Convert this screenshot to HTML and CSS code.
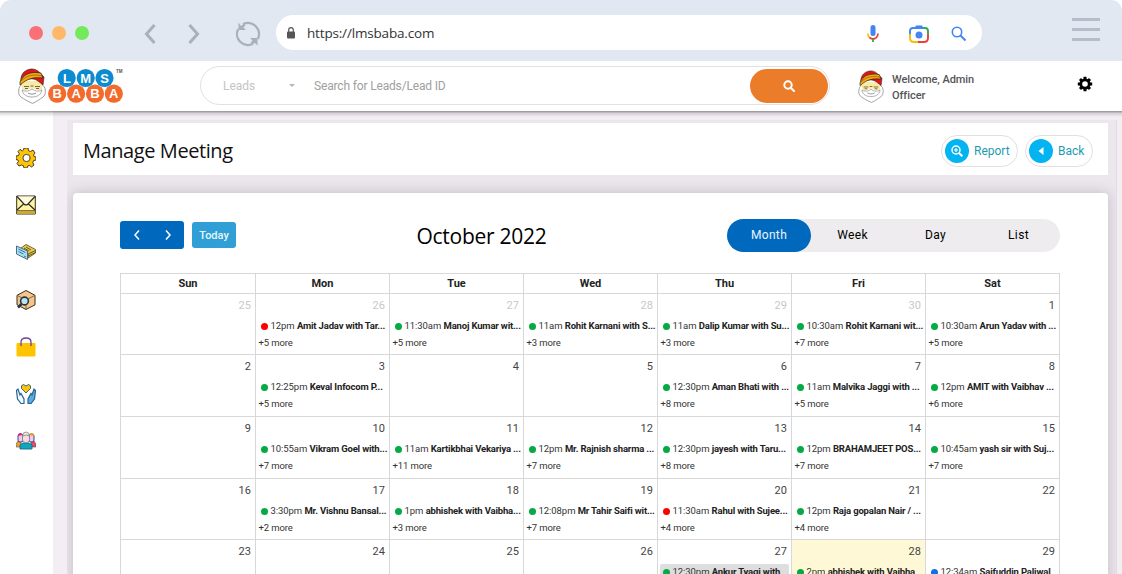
FILE: index.html
```html
<!DOCTYPE html>
<html lang="en">
<head>
<meta charset="utf-8">
<title>LMS Baba - Manage Meeting</title>
<link rel="stylesheet" href="styles.css">
</head>
<body>
<svg class="defs" aria-hidden="true">
  <symbol id="santa" viewBox="0 0 28 36">
    <path d="M1.500 19C0 23 .4 27 3 29c3 2 6 4 11.500 6.400C19 33.500 22 31 25 29c2.500-2 3-6 1.500-10l-3-3H4z" fill="#fff" stroke="#777" stroke-width=".7"/>
    <path d="M4 13h20v8c-1 2-4 1-5 1-3-2-7-2-10 0-2 1-5 0-5-2z" fill="#fbe9a6"/>
    <path d="M3 15C2 8 5 2 13 1c6-.5 9 4 13 8l-1 8-5-4C14 9 8 11 3 15z" fill="#e2131b" stroke="#222" stroke-width=".6"/>
    <path d="M2 14C5 7 11 3 23 5l2 5c-9-1-15 0-23 7z" fill="#f7a80d" stroke="#222" stroke-width=".7"/>
    <path d="M3 13C9 7 16 6 24 8" fill="none" stroke="#7b4b08" stroke-width=".6"/>
    <path d="M6 18.500h5m6 0h5M7 20.500h3m8 0h3M12.500 18h3" fill="none" stroke="#444" stroke-width=".8"/>
    <path d="M4 22c4 2 7 1 10-1 3 2 6 3 10 1-1 5-5 7-10 7s-9-2-10-7z" fill="#fff" stroke="#888" stroke-width=".7"/>
    <path d="M10 25c3 1.500 5 1.500 8 0" fill="none" stroke="#666" stroke-width=".7"/>
  </symbol>
</svg>

<header class="browser">
  <div class="lights"><i class="red"></i><i class="amber"></i><i class="green"></i></div>
  <svg class="nav-arrow" viewBox="0 0 12 20"><path d="M10.500 1 2.500 10l8 9" fill="none" stroke="#a9b0bc" stroke-width="3"/></svg>
  <svg class="nav-arrow next" viewBox="0 0 12 20"><path d="m1.500 1 8 9-8 9" fill="none" stroke="#a9b0bc" stroke-width="3"/></svg>
  <svg class="reload" viewBox="0 0 26 26"><g fill="none" stroke="#a9b0bc" stroke-width="2.300"><path d="M8 3.200A11 11 0 0 1 22.800 18"/><path d="M18 22.800A11 11 0 0 1 3.200 8"/></g><path d="M3.500 1.500V9H11L8.500 6.500l2-2.500-2-1-2.500 2zM22.500 24.500V17H15l2.500 2.500-2 2.500 2 1 2.500-1z" fill="#a9b0bc"/></svg>
  <div class="url">
    <svg class="lock" viewBox="0 0 8 12"><path d="M1.700 5V3a2.300 2.300 0 0 1 4.600 0v2" fill="none" stroke="#54565a" stroke-width="1.200"/><rect y="4.500" width="8" height="7" rx="1" fill="#54565a"/></svg>
    <span>https://lmsbaba.com</span>
    <svg class="mic" viewBox="0 0 12 18"><rect x="3.500" y="0" width="5" height="11" rx="2.500" fill="#4285f4"/><path d="M1 8.500A5 5 0 0 0 3 13" fill="none" stroke="#fbbc04" stroke-width="1.700"/><path d="M2.600 12.500Q6 15.500 9.500 12.300 11 10.500 11 8.500" fill="none" stroke="#ea4335" stroke-width="1.700"/><path d="M6 14v3" stroke="#34a853" stroke-width="1.800"/></svg>
    <svg class="camera" viewBox="0 0 20 18"><g fill="none" stroke-width="1.900"><path d="M1 10V6q0-3 3-3h2" stroke="#4285f4"/><path d="M14 3h2q3 0 3 3v3" stroke="#34a853"/><path d="M19 9v4q0 4-4 4H8" stroke="#ea4335"/><path d="M1 9v4q0 4 4 4h4" stroke="#fbbc04"/></g><path d="M5 4 7 .500h6L15 4z" fill="#4285f4"/><circle cx="10" cy="10" r="3.500" fill="#4285f4"/></svg>
    <svg class="find" viewBox="0 0 16 16"><circle cx="6" cy="6" r="4.700" fill="none" stroke="#4285f4" stroke-width="1.600"/><path d="m9.500 9.500 5 5" stroke="#4285f4" stroke-width="2"/></svg>
  </div>
  <div class="burger"><i></i><i></i><i></i></div>
</header>

<div class="appbar">
  <svg class="santa-logo"><use href="#santa"/></svg>
  <svg class="brand" viewBox="48 68 76 36">
    <g fill="#0c8bd0"><circle cx="66.700" cy="78" r="9.100"/><circle cx="85.700" cy="78" r="9.100"/><circle cx="104.500" cy="78" r="9.100"/></g>
    <g fill="#f26a2c"><circle cx="57.200" cy="93.700" r="9.100"/><circle cx="76.100" cy="93.700" r="9.100"/><circle cx="95" cy="93.700" r="9.100"/><circle cx="113.800" cy="93.700" r="9.100"/></g>
    <g class="brand-text"><text x="67" y="82.500">L</text><text x="85.700" y="82.500">M</text><text x="104.500" y="82.500">S</text><text x="57.200" y="98.300">B</text><text x="76.100" y="98.300">A</text><text x="95" y="98.300">B</text><text x="113.800" y="98.300">A</text></g>
    <text class="tm" x="116" y="73">TM</text>
  </svg>
  <div class="search">
    <span class="scope">Leads</span><i class="caret"></i>
    <span class="hint">Search for Leads/Lead ID</span>
    <div class="go"><svg viewBox="0 0 12 12"><circle cx="5" cy="5" r="3.700" fill="none" stroke="#fff" stroke-width="2"/><path d="m8 8 3 3" stroke="#fff" stroke-width="2.200" stroke-linecap="round"/></svg></div>
  </div>
  <svg class="avatar"><use href="#santa"/></svg>
  <div class="welcome">Welcome, Admin<br>Officer</div>
  <svg class="settings" viewBox="-8 -8 16 16"><circle r="4.200" fill="none" stroke="#000" stroke-width="2.800"/><g stroke="#000" stroke-width="3"><path d="M0-7.200v2.500M0 7.200V4.700M-7.200 0h2.500M7.200 0H4.700M-5-5l1.700 1.700M5-5 3.300-3.300M-5 5l1.700-1.700M5 5 3.300 3.300"/></g></svg>
</div>

<div class="body">
  <nav class="side">
    <svg viewBox="0 0 20 20"><path d="M8 0h4l.5 2.700 2 .8L17 2l2 3-1.500 2 .5 1.500 2 .5v3l-2.400.600-.8 1.900L18 17l-2.500 2-2.200-1.600-1.500.6L11 20H8l-.6-2.300-1.900-.7L3 18l-2-2.500 1.500-2.200L2 12l-2-.5V8l2.500-.5.8-1.800L2 3.500 4 1.400l2.300 1.500L7.500 2z" fill="#fcc30a" stroke="#332b12" stroke-width=".9"/><circle cx="10.500" cy="10" r="3.600" fill="#fff" stroke="#444" stroke-width="1"/><path d="M13 7q3 3 0 6" fill="none" stroke="#b77900"/></svg>
    <svg viewBox="0 0 20 20"><path d="M.7 1h18.600v18H.7z" fill="#fff3a5" stroke="#332f1c"/><path d="M1 15.500h18V19H1z" fill="#c9a936"/><path d="M1 15.500h18" stroke="#5f5224" stroke-width=".7"/><path d="M1 1.500 7.500 9l2.500 1.500L12.500 9 19 1.500z" fill="#fffbe0"/><path d="m1 1.500 7 7.500q2 2 4 0l7-7.500M1 15l6.500-6M19 15l-6.500-6" fill="none" stroke="#28261c" stroke-width="1.100"/></svg>
    <svg viewBox="0 0 20 20"><path d="m5 6 5-3.500 9.500 5v3.500L12 16 5 12z" fill="#eac84a" stroke="#655924" stroke-width=".9"/><path d="m12 12 7.500-3.500M12 14l7.500-3.500M12 12v4M8 6l5 3m-3-4 5 3" stroke="#514b24" stroke-width=".9"/><path d="m.5 4 11 5v8.500L.5 12z" fill="#a9dcf4" stroke="#396577" stroke-width=".9"/><path d="m2.500 7 7 3.500M2.500 9.500l5 2.500M8 14l2 1" stroke="#3d7b94" stroke-width="1"/></svg>
    <svg viewBox="0 0 20 20"><path d="m10 .500 9 4.800v9.500l-9 4.700-9-4.700V5.300z" fill="#f5c68c" stroke="#382c20"/><path d="m1 5.300 9 4.700 9-4.700M10 10v9" fill="none" stroke="#80592f" stroke-width=".9"/><circle cx="8.500" cy="11" r="3.900" fill="#b9e3ee" stroke="#233845" stroke-width="1.600"/><path d="m5.500 14-3.500 3.500" stroke="#233845" stroke-width="2.500"/></svg>
    <svg viewBox="0 0 20 20"><rect x=".5" y="6" width="19" height="13.500" rx="1" fill="#ffc400"/><path d="M5 9V5q0-4 5-4t5 4v4" fill="none" stroke="#70428f" stroke-width="1.300"/></svg>
    <svg viewBox="0 0 20 20"><path d="M10 9 5.500 4.500Q4.500 1 7.500.500L10 2 12.500.500Q15.500 1 14.500 4.500z" fill="#fbc40b" stroke="#275a86" stroke-width=".9"/><path d="M.500 6.500 2 5l2 6 1-1.500 3 5.500v4.500H5L1.500 15z" fill="#eff9ff" stroke="#286391" stroke-width="1.200"/><path d="M19.500 6.500 18 5l-2 6-1-1.500-3 5.500v4.500h3l3.500-4.500z" fill="#58aee0" stroke="#286391" stroke-width="1.200"/></svg>
    <svg viewBox="0 0 20 20"><path d="M0 16v-3l2-3h3v6z" fill="#ff9b1c" stroke="#25618b" stroke-width=".6"/><path d="M20 16v-3l-2-3h-3v6z" fill="#ff405d" stroke="#25618b" stroke-width=".6"/><rect x="2" y="3" width="5" height="8" rx="2" fill="#f7cae0" stroke="#294b8f"/><rect x="13" y="3" width="5" height="8" rx="2" fill="#f7cae0" stroke="#294b8f"/><path d="M2 5q0-3.500 3-3l2 2z" fill="#d52b83"/><path d="M18 5q0-3.500-3-3l-2 2z" fill="#ef972b"/><path d="M4 18v-4l3-2h6l3 2v4z" fill="#10a7b8" stroke="#176795" stroke-width=".9"/><rect x="6.500" y="3" width="7" height="8.500" rx="3" fill="#ffd9d9" stroke="#536ca8" stroke-width=".6"/><path d="M6.500 5Q6.500 1 10 1t3.500 4l-3-1z" fill="#f0eac2" stroke="#476d8b" stroke-width=".6"/></svg>
  </nav>
  <main class="main">
    <div class="panel">
      <section class="title-card">
        <h1>Manage Meeting</h1>
        <a class="pill report"><b><svg viewBox="0 0 12 12"><circle cx="5" cy="5" r="4" fill="none" stroke="#fff" stroke-width="1.500"/><path d="m8 8 3.300 3.300" stroke="#fff" stroke-width="2"/><path d="M5 3v4M3 5h4" stroke="#fff" stroke-width="1.200"/></svg></b>Report</a>
        <a class="pill back"><b><svg viewBox="0 0 12 12"><path d="M8.500 2v8L3.500 6z" fill="#fff"/></svg></b>Back</a>
      </section>
      <section class="cal-card">
        <div class="toolbar">
          <div class="pager"><svg viewBox="0 0 8 12"><path d="M6 1.500 2 6l4 4.500" /></svg><svg viewBox="0 0 8 12"><path d="m2 1.500 4 4.500-4 4.500"/></svg></div>
          <div class="today-btn">Today</div>
          <h2>October 2022</h2>
          <div class="views"><span class="on">Month</span><span>Week</span><span>Day</span><span>List</span></div>
        </div>
        <div class="grid">
          <div class="head">Sun</div><div class="head">Mon</div><div class="head">Tue</div><div class="head">Wed</div><div class="head">Thu</div><div class="head">Fri</div><div class="head">Sat</div>

          <div class="day out"><time>25</time></div>
          <div class="day out"><time>26</time><p class="ev r">12pm <b>Amit Jadav with Tar...</b></p><p class="more">+5 more</p></div>
          <div class="day out"><time>27</time><p class="ev">11:30am <b>Manoj Kumar wit...</b></p><p class="more">+5 more</p></div>
          <div class="day out"><time>28</time><p class="ev">11am <b>Rohit Karnani with S...</b></p><p class="more">+3 more</p></div>
          <div class="day out"><time>29</time><p class="ev">11am <b>Dalip Kumar with Su...</b></p><p class="more">+3 more</p></div>
          <div class="day out"><time>30</time><p class="ev">10:30am <b>Rohit Karnani wit...</b></p><p class="more">+7 more</p></div>
          <div class="day"><time>1</time><p class="ev">10:30am <b>Arun Yadav with ...</b></p><p class="more">+5 more</p></div>

          <div class="day"><time>2</time></div>
          <div class="day"><time>3</time><p class="ev">12:25pm <b>Keval Infocom P...</b></p><p class="more">+5 more</p></div>
          <div class="day"><time>4</time></div>
          <div class="day"><time>5</time></div>
          <div class="day"><time>6</time><p class="ev">12:30pm <b>Aman Bhati with ...</b></p><p class="more">+8 more</p></div>
          <div class="day"><time>7</time><p class="ev">11am <b>Malvika Jaggi with ...</b></p><p class="more">+5 more</p></div>
          <div class="day"><time>8</time><p class="ev">12pm <b>AMIT with Vaibhav ...</b></p><p class="more">+6 more</p></div>

          <div class="day"><time>9</time></div>
          <div class="day"><time>10</time><p class="ev">10:55am <b>Vikram Goel with...</b></p><p class="more">+7 more</p></div>
          <div class="day"><time>11</time><p class="ev">11am <b>Kartikbhai Vekariya ...</b></p><p class="more">+11 more</p></div>
          <div class="day"><time>12</time><p class="ev">12pm <b>Mr. Rajnish sharma ...</b></p><p class="more">+7 more</p></div>
          <div class="day"><time>13</time><p class="ev">12:30pm <b>jayesh with Taru...</b></p><p class="more">+8 more</p></div>
          <div class="day"><time>14</time><p class="ev">12pm <b>BRAHAMJEET POS...</b></p><p class="more">+7 more</p></div>
          <div class="day"><time>15</time><p class="ev">10:45am <b>yash sir with Suj...</b></p><p class="more">+7 more</p></div>

          <div class="day"><time>16</time></div>
          <div class="day"><time>17</time><p class="ev">3:30pm <b>Mr. Vishnu Bansal...</b></p><p class="more">+2 more</p></div>
          <div class="day"><time>18</time><p class="ev">1pm <b>abhishek with Vaibha...</b></p><p class="more">+3 more</p></div>
          <div class="day"><time>19</time><p class="ev">12:08pm <b>Mr Tahir Saifi wit...</b></p><p class="more">+7 more</p></div>
          <div class="day"><time>20</time><p class="ev r">11:30am <b>Rahul with Sujee...</b></p><p class="more">+4 more</p></div>
          <div class="day"><time>21</time><p class="ev">12pm <b>Raja gopalan Nair / ...</b></p><p class="more">+4 more</p></div>
          <div class="day"><time>22</time></div>

          <div class="day"><time>23</time></div>
          <div class="day"><time>24</time></div>
          <div class="day"><time>25</time></div>
          <div class="day"><time>26</time></div>
          <div class="day"><time>27</time><p class="ev hover">12:30pm <b>Ankur Tyagi with</b></p></div>
          <div class="day now"><time>28</time><p class="ev">2pm <b>abhishek with Vaibha</b></p></div>
          <div class="day"><time>29</time><p class="ev b">12:34am <b>Saifuddin Paliwal</b></p></div>
        </div>
      </section>
    </div>
  </main>
</div>
</body>
</html>
```
FILE: styles.css
```css
* { box-sizing: border-box; }
body { margin: 0; width: 1122px; height: 574px; overflow: hidden; display: flex; flex-direction: column; background: #fff; font-family: Roboto, "Liberation Sans", sans-serif; color: #222; }
h1, h2, p { margin: 0; font-weight: 400; }
svg { display: block; flex: none; }
.defs { position: absolute; width: 0; height: 0; }

.browser { flex: none; height: 61px; background: #e1e8f2; border-radius: 11px 11px 0 0; display: flex; align-items: center; padding: 0 22px 0 29px; }
.lights { display: flex; gap: 9px; margin-top: 5px; }
.lights i { width: 14px; height: 14px; border-radius: 50%; }
.red { background: #fb6f76; }
.amber { background: #ffb868; }
.green { background: #74ea5b; }
.nav-arrow { width: 12px; height: 20px; margin: 6px 0 0 55px; }
.nav-arrow.next { margin-left: 32px; }
.reload { width: 26px; height: 26px; margin: 6px 0 0 35px; }
.url { width: 706px; height: 35px; margin: 4px 0 0 15px; border-radius: 17.5px; background: #fff; display: flex; align-items: center; padding: 0 0 0 11px; font: 13.5px "Open Sans", "Noto Sans", sans-serif; color: #333; }
.url span { flex: none; width: 571px; padding-left: 12px; letter-spacing: -.17px; margin-top: 1px; }
.lock { width: 8px; height: 12px; }
.mic { width: 12px; height: 18px; margin-left: 1px; margin-top: 2px; }
.camera { width: 20px; height: 18px; margin-left: 30px; margin-top: 2px; }
.find { width: 16px; height: 16px; margin-left: 22px; margin-top: 2px; }
.burger { width: 28px; display: grid; gap: 7px; margin: -2px 0 0 90px; }
.burger i { height: 3px; background: #b5bdc9; }

.appbar { flex: none; position: relative; z-index: 1; height: 50px; background: #fff; display: flex; align-items: center; padding-left: 18px; }
.appbar::after { content: ""; position: absolute; z-index: -1; left: 0; right: 0; top: 100%; height: 6px; background: linear-gradient(rgba(0, 0, 0, .4), rgba(0, 0, 0, .12) 40%, transparent); }
.santa-logo { width: 28px; height: 36px; }
.brand { width: 76px; height: 36px; margin: 0 0 0 2px; }
.brand-text { font: 700 13px "Liberation Sans", sans-serif; fill: #fff; text-anchor: middle; }
.tm { font: 700 4.5px "Liberation Sans", sans-serif; fill: #555; }
.search { width: 630px; height: 39px; margin: -1px 0 0 76px; border: 1px solid #e1e1e1; border-radius: 20px; display: flex; align-items: center; padding-left: 22px; font-size: 12px; color: #a0a0a0; }
.scope { flex: none; width: 66px; color: #c4c4c4; }
.caret { flex: none; border: 3.5px solid transparent; border-top-color: #b5b5b5; border-bottom: 0; }
.hint { flex: none; width: 455px; padding-left: 19px; letter-spacing: -.16px; }
.go { flex: none; width: 78px; height: 34px; border-radius: 17px; background: #eb7c29; display: grid; place-items: center; }
.go svg { width: 12px; height: 12px; }
.avatar { width: 26px; height: 33px; margin-left: 28px; }
.welcome { width: 185px; margin: 3px 0 0 8px; font-size: 11px; line-height: 16px; font-weight: 500; color: #555; letter-spacing: -.05px; }
.settings { width: 16px; height: 16px; margin-top: -4px; }

.body { flex: 1; display: flex; min-height: 0; }
.side { width: 53px; background: #fff; display: flex; flex-direction: column; align-items: center; gap: 27.2px; padding: 37px 1px 0 0; }
.side svg { width: 20px; height: 20px; }
.main { flex: 1; background: #f3eef4; padding: 9px 5px 0 14px; }
.panel { height: 454px; background: #ece6ed; padding: 3px 8px 0 6px; border-right: 1px solid #e2dce4; overflow: hidden; }
.title-card { height: 52px; background: #fff; display: flex; align-items: center; gap: 7px; padding: 3px 15px 0 10px; }
h1 { flex: 1; font: 20px "Open Sans", "Noto Sans", sans-serif; color: #111; letter-spacing: -.42px; }
.pill { height: 32px; border: 1px solid #e0e0e4; border-radius: 16px; display: flex; align-items: center; gap: 5px; padding-left: 3px; font-size: 12px; color: #1c9cb1; }
.pill b { width: 24px; height: 24px; border-radius: 50%; background: #04b4f2; display: grid; place-items: center; }
.pill svg { width: 12px; height: 12px; }
.report { width: 77px; }
.back { width: 68px; }

.cal-card { height: 400px; margin-top: 18px; background: #fff; border-radius: 4px; box-shadow: 0 0 13px rgba(70, 60, 75, .25); padding: 26px 48px 0 47px; }
.toolbar { height: 33px; display: flex; align-items: center; }
.pager { width: 64px; height: 28px; margin-top: -1px; border-radius: 3px; background: #0069bd; display: flex; justify-content: space-between; align-items: center; padding: 0 12px 0 13px; }
.pager svg { width: 8px; height: 12px; fill: none; stroke: #fff; stroke-width: 1.5; }
.today-btn { width: 44px; height: 26px; margin: -1px 0 0 8px; border-radius: 3px; background: #2f9fd5; color: #e8f7ff; font-size: 11px; line-height: 27px; font-weight: 500; text-align: center; }
h2 { width: 491px; font: 21px "Open Sans", "Noto Sans", sans-serif; color: #000; text-align: center; letter-spacing: -.25px; }
.views { width: 333px; height: 33px; border-radius: 17px; background: #eeecee; display: flex; font-size: 12px; line-height: 32px; color: #000; letter-spacing: .35px; text-align: center; }
.views span { width: 83px; }
.views .on { width: 84px; border-radius: 17px; background: #0069bd; color: #e8f5ff; }

.grid { width: 940px; margin-top: 21px; display: grid; grid-template-columns: 135px repeat(5, 134px) 135px; grid-template-rows: 19px 61px 62px 62px 61px 62px; border-top: 1px solid #d8d8d8; }
.head { border-left: 1px solid #d8d8d8; font-size: 11px; line-height: 20px; font-weight: 700; text-align: center; }
.day { border-left: 1px solid #d8d8d8; border-top: 1px solid #d8d8d8; min-width: 0; overflow: hidden; padding: 0 2px; }
.grid > :nth-child(7n) { border-right: 1px solid #d8d8d8; }
time { display: block; height: 24px; padding: 5px 2px 0 0; font-size: 11px; line-height: 13px; text-align: right; color: #444; letter-spacing: .1px; }
.out time { color: #c8c8c8; }
.ev { height: 16px; display: flex; align-items: center; white-space: pre; font-size: 9.5px; line-height: 16px; color: #333; border-radius: 2px; letter-spacing: -.06px; }
.ev::before { content: ""; flex: none; width: 7px; height: 7px; margin: 1px 3px 0 2.5px; border-radius: 50%; background: #04aa43; }
.ev b { font-weight: 700; color: #222; letter-spacing: -.17px; }
.ev.r::before { background: #f00; }
.ev.b::before { background: #0d72e8; }
.ev.hover { background: #dedede; }
.more { padding-left: .5px; margin-top: 2px; font-size: 9.5px; line-height: 14px; color: #333; letter-spacing: -.1px; }
.now { background: #fff8d6; }
```
